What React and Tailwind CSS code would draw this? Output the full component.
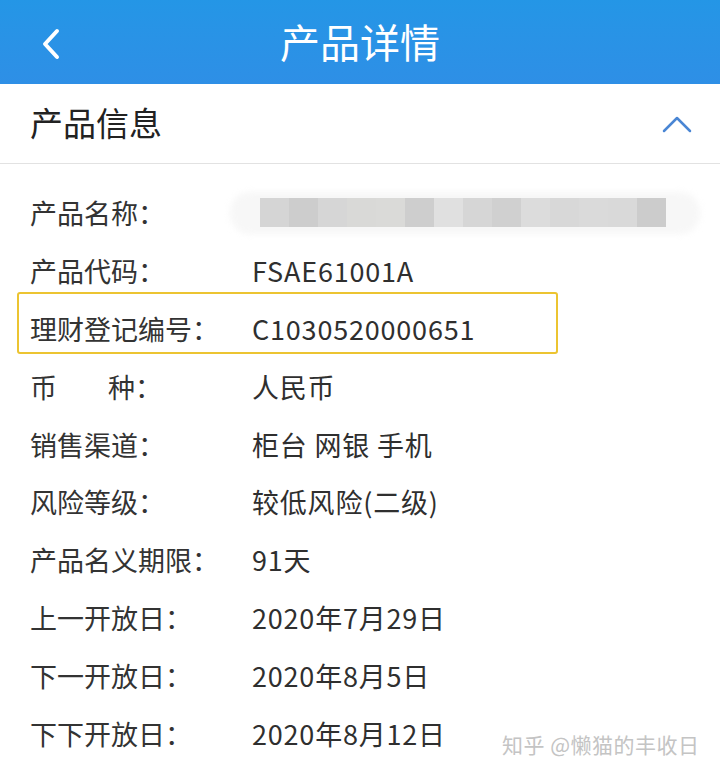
import React from 'react';

const rows = [
  { label: '产品代码：', value: 'FSAE61001A' },
  { label: '理财登记编号：', value: 'C1030520000651', highlight: true },
  { label: 'currency', value: '人民币' },
  { label: '销售渠道：', value: '柜台 网银 手机' },
  { label: '风险等级：', value: '较低风险(二级)' },
  { label: '产品名义期限：', value: '91天' },
  { label: '上一开放日：', value: '2020年7月29日' },
  { label: '下一开放日：', value: '2020年8月5日' },
  { label: '下下开放日：', value: '2020年8月12日' },
];

const blurBlocks = ['#d5d5d5', '#cdcdcd', '#d6d6d6', '#d9d9d7', '#dadad8', '#cecece', '#e0e0e0', '#d6d6d6', '#d0d0d0', '#dcdcdc', '#d8d8d8', '#dadada', '#d9d9d9', '#cccccc'];

const font = { fontFamily: '"Noto Sans CJK SC", "Noto Sans", sans-serif' };

const Label = ({ text }) => {
  if (text === 'currency') {
    return (
      <div className="w-[222px] shrink-0 flex">
        <span>币</span>
        <span className="ml-[51px]">种：</span>
      </div>
    );
  }
  return <div className="w-[222px] shrink-0">{text}</div>;
};

export default function App() {
  return (
    <div className="relative w-[720px] h-[777px] bg-white overflow-hidden" style={font}>
      {/* Header */}
      <div className="h-[84px] bg-gradient-to-b from-[#2496e6] to-[#2e8fe6] flex items-center relative">
        <svg className="absolute left-[40px] top-[28px]" width="22" height="32" viewBox="0 0 22 32">
          <path d="M17 3 L5 16 L17 29" fill="none" stroke="#fff" strokeWidth="4" strokeLinecap="round" strokeLinejoin="round" />
        </svg>
        <div className="w-full text-center text-white text-[40px] leading-none -mt-[3px]">产品详情</div>
      </div>

      {/* Section header */}
      <div className="h-[80px] flex items-center justify-between pl-[30px] pr-[28px] border-b border-[#e2e2e2]">
        <div className="text-[33px] text-[#222] leading-none -mt-[2px]">产品信息</div>
        <svg width="30" height="18" viewBox="0 0 30 18">
          <path d="M2 16 L15 3 L28 16" fill="none" stroke="#4a86d4" strokeWidth="2.5" strokeLinecap="round" strokeLinejoin="round" />
        </svg>
      </div>

      {/* Rows */}
      <div className="pt-[20px] text-[27px] text-[#333] leading-none">
        <div className="h-[57.8px] flex items-center pl-[30px] relative">
          <Label text="产品名称：" />
          <div className="relative flex items-center">
            <div className="absolute -left-[22px] -right-[34px] h-[42px] bg-[#f7f7f7] rounded-[20px] blur-[3px]" />
            <div className="relative ml-[8px] h-[29px] flex">
              {blurBlocks.map((c, i) => (
                <div key={i} className="w-[29px] h-full" style={{ backgroundColor: c }} />
              ))}
            </div>
          </div>
        </div>
        {rows.map((r) => (
          <div key={r.value} className="h-[57.8px] flex items-center pl-[30px] relative">
            {r.highlight && (
              <div className="absolute left-[17px] w-[541px] top-[-8px] bottom-[3px] border-2 border-[#ecc431] rounded-[3px]" />
            )}
            <Label text={r.label} />
            <div className="text-[#2f2f2f] tracking-[0.8px]">{r.value}</div>
          </div>
        ))}
      </div>

      {/* Watermark */}
      <div className="absolute left-[502px] top-[734px] text-[21px] text-[#c4c4c4] leading-none tracking-[0.5px]" style={{ textShadow: '1px 1px 0 #fff' }}>
        知乎 @懒猫的丰收日
      </div>
    </div>
  );
}
